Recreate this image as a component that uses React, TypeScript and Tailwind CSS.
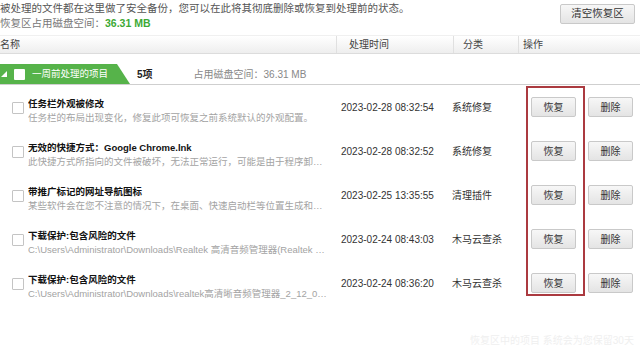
const font = "font-['Liberation_Sans','Noto_Sans_CJK_SC',sans-serif]";

interface Item {
    title: string;
    desc: string;
    time: string;
    category: string;
}

const items: Item[] = [
    {
        title: "任务栏外观被修改",
        desc: "任务栏的布局出现变化，修复此项可恢复之前系统默认的外观配置。",
        time: "2023-02-28 08:32:54",
        category: "系统修复",
    },
    {
        title: "无效的快捷方式：Google Chrome.lnk",
        desc: "此快捷方式所指向的文件被破坏，无法正常运行，可能是由于程序卸载不完全导致的",
        time: "2023-02-28 08:32:52",
        category: "系统修复",
    },
    {
        title: "带推广标记的网址导航图标",
        desc: "某些软件会在您不注意的情况下，在桌面、快速启动栏等位置生成和软件推广相关的图标",
        time: "2023-02-25 13:35:55",
        category: "清理插件",
    },
    {
        title: "下载保护:包含风险的文件",
        desc: "C:\\Users\\Administrator\\Downloads\\Realtek 高清音频管理器(Realtek HD Audio).exe",
        time: "2023-02-24 08:43:03",
        category: "木马云查杀",
    },
    {
        title: "下载保护:包含风险的文件",
        desc: "C:\\Users\\Administrator\\Downloads\\realtek高清晰音频管理器_2_12_0.exe",
        time: "2023-02-24 08:36:20",
        category: "木马云查杀",
    },
];

function Btn({ label, wide }: { label: string; wide?: boolean }) {
    return (
        <button
            className={`${wide ? "w-[75px] h-[20px] text-[10.5px]" : "w-[45px] h-[20px] text-[10px]"} flex items-center justify-center rounded-[2px] border border-[#c9c9c9] bg-gradient-to-b from-[#f7f7f7] to-[#e4e4e4] text-[#333]`}
        >
            {label}
        </button>
    );
}

function Check() {
    return (
        <div className="w-[12px] h-[12px] border border-[#c4c4c4] bg-white rounded-[1px]" />
    );
}

export default function App() {
    return (
        <div className={`${font} relative w-[640px] h-[347px] bg-white overflow-hidden text-[#222]`}>
            {/* intro */}
            <div className="flex h-[31px]">
                <div className="flex-1 pt-[1px]">
                    <div className="text-[10.5px] leading-[14px] text-[#555] whitespace-nowrap">
                        被处理的文件都在这里做了安全备份，您可以在此将其彻底删除或恢复到处理前的状态。
                    </div>
                    <div className="text-[10.5px] leading-[16px] text-[#777] whitespace-nowrap">
                        恢复区占用磁盘空间：
                        <span className="font-bold text-[#3da935]">36.31 MB</span>
                    </div>
                </div>
                <div className="pt-[4px] pr-[5px]">
                    <Btn label="清空恢复区" wide />
                </div>
            </div>

            {/* table header */}
            <div className="mt-[4px] h-[19px] grid grid-cols-[336px_117px_65px_122px] bg-gradient-to-b from-white to-[#eeeeee] border-t border-t-[#f0f0f0] border-b border-b-[#dcdcdc] text-[10px] text-[#444]">
                <div className="flex items-center">名称</div>
                <div className="flex items-center pl-[12px] border-l border-[#e0e0e0]">处理时间</div>
                <div className="flex items-center pl-[9px] border-l border-[#e0e0e0]">分类</div>
                <div className="flex items-center pl-[4px] border-l border-[#e0e0e0]">操作</div>
            </div>

            {/* group */}
            <div className="mt-[10px] flex items-end h-[21px] border-b border-[#cfcfcf]">
                <div className="w-[130px] h-[20px] bg-[#56b34a] [clip-path:polygon(0_0,90%_0,100%_100%,0_100%)] flex items-center">
                    <div className="w-0 h-0 ml-[1px] border-l-[6px] border-l-transparent border-b-[6px] border-b-white" />
                    <div className="ml-[7px] w-[11px] h-[11px] bg-white rounded-[1px]" />
                    <span className="ml-[7px] text-[9.5px] text-white whitespace-nowrap">一周前处理的项目</span>
                </div>
                <div className="h-[20px] flex items-center ml-[7px] text-[10px] font-bold">5项</div>
                <div className="h-[20px] flex items-center ml-[41px] text-[10px] text-[#888]">
                    占用磁盘空间：36.31 MB
                </div>
            </div>

            {/* rows */}
            <div className="flex flex-col">
                {items.map((it, i) => (
                    <div
                        key={i}
                        className="h-[44px] grid grid-cols-[28px_313px_111px_79px_56px_53px] items-center"
                    >
                        <div className="flex justify-end pr-[4px] pt-[1px]">
                            <Check />
                        </div>
                        <div className="min-w-0 pr-[13px] pt-[7px]">
                            <div className="text-[9.5px] leading-[14px] font-bold text-[#111] truncate">
                                {it.title}
                            </div>
                            <div className="text-[9.5px] leading-[14px] text-[#a3a3a3] truncate">
                                {it.desc}
                            </div>
                        </div>
                        <div className="text-[10px] text-[#333] whitespace-nowrap">{it.time}</div>
                        <div className="text-[10px] text-[#333] whitespace-nowrap">{it.category}</div>
                        <div className="flex">
                            <Btn label="恢复" />
                        </div>
                        <div className="flex pl-[1px]">
                            <Btn label="删除" />
                        </div>
                    </div>
                ))}
            </div>

            <div className="mt-[28px] ml-[470px] text-[10px] text-[#efefef] whitespace-nowrap">
                恢复区中的项目 系统会为您保留30天
            </div>

            {/* annotation box */}
            <div className="absolute left-[526px] top-[86px] w-[59px] h-[210px] border-2 border-[#ab3a40]" />
        </div>
    );
}
